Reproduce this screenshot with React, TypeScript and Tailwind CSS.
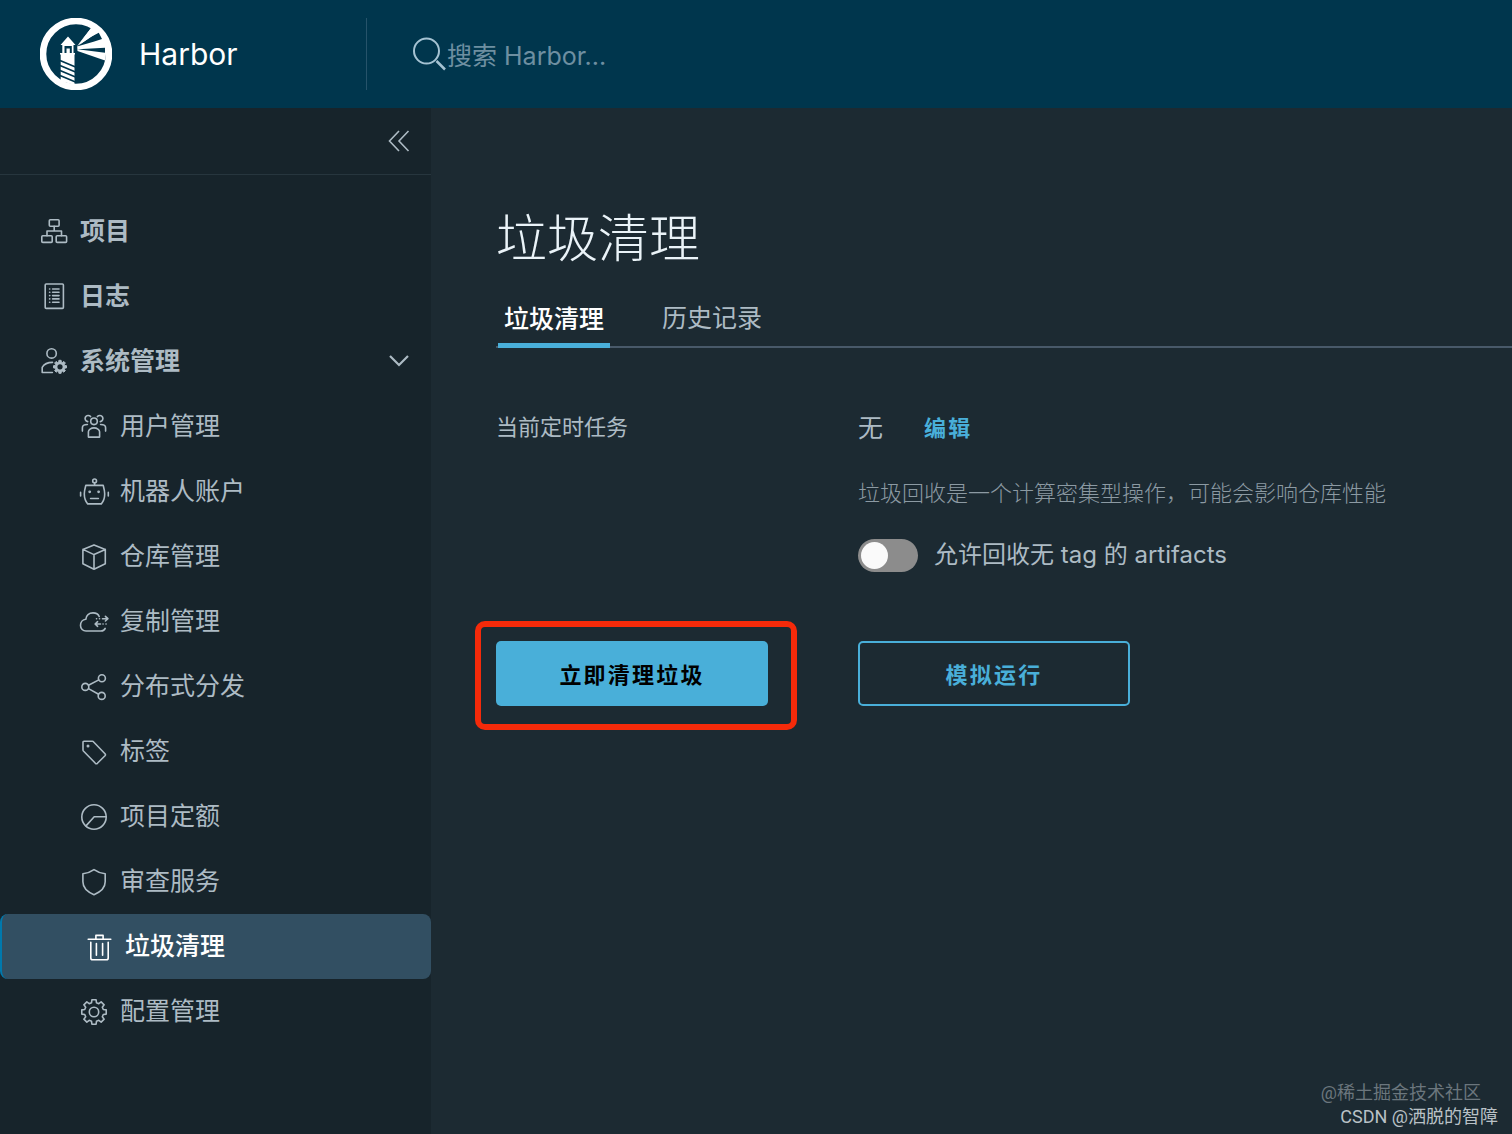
import React, { useState } from 'react';

type IconProps = { children: React.ReactNode; className?: string };

const Icon: React.FC<IconProps> = ({ children, className = '' }) => (
  <svg
    viewBox="0 0 28 28"
    fill="none"
    stroke="currentColor"
    strokeWidth="1.6"
    strokeLinejoin="round"
    strokeLinecap="round"
    aria-hidden="true"
    className={`size-7 shrink-0 overflow-visible ${className}`}
  >
    {children}
  </svg>
);

// Outline of a cog, eight teeth
const cog = (cx: number, cy: number, outer: number, inner: number) => {
  const points: string[] = [];
  for (let i = 0; i < 8; i++) {
    const a = (i * Math.PI) / 4;
    [
      [-0.26, inner],
      [-0.17, outer],
      [0.17, outer],
      [0.26, inner],
    ].forEach(([d, r]) => {
      points.push(`${(cx + r * Math.sin(a + d)).toFixed(2)} ${(cy - r * Math.cos(a + d)).toFixed(2)}`);
    });
  }
  return `M${points.join('L')}Z`;
};

const icons = {
  projects: (
    <Icon>
      <rect x="9.3" y="1.8" width="9.8" height="6.4" rx="1" />
      <rect x="1.8" y="17.8" width="10.4" height="6.6" rx="1" />
      <rect x="16.2" y="17.8" width="10.4" height="6.6" rx="1" />
      <path d="M14.2 8.2V13M7 17.8V13h14.5v4.8" />
    </Icon>
  ),
  logs: (
    <Icon>
      <rect x="5.2" y="1" width="18.2" height="24.4" rx="1" />
      <path d="M12.6 6h6.4M12.6 9.3h6.4M12.6 12.6h6.4M12.6 15.9h6.4M12.6 19.2h6.4" />
      <path d="M9.6 6h.2M9.6 9.3h.2M9.6 12.6h.2M9.6 15.9h.2M9.6 19.2h.2" />
    </Icon>
  ),
  admin: (
    <Icon>
      <circle cx="11.6" cy="5.4" r="4.7" />
      <path d="M12.4 24.5H2.2v-5.1c1.8-3.2 5.5-5 10.3-5" />
      <path d={cog(20, 18.8, 6.6, 5)} fill="currentColor" strokeWidth="1" />
      <circle cx="20" cy="18.8" r="2.6" className="fill-[#17242b]" stroke="none" />
    </Icon>
  ),
  users: (
    <Icon>
      <circle cx="14" cy="8.3" r="3.3" />
      <path d="M8.4 24.1v-5.3c0-2 2.6-3.9 5.6-3.9s5.6 1.9 5.6 3.9v5.3z" />
      <path d="M10.6 3.6a3.1 3.1 0 1 0-2.9 5M17.4 3.6a3.1 3.1 0 1 1 2.9 5" />
      <path d="M2.4 18.1v-3.4c0-1.8 1.9-3.2 5-3.2M25.6 18.1v-3.4c0-1.8-1.9-3.2-5-3.2" />
    </Icon>
  ),
  robot: (
    <Icon>
      <circle cx="14.6" cy="2.9" r="1.9" />
      <path d="M14.6 4.8v2.6M5.8 7.4h17.4c.7 2.6 1.5 5.4 1.5 8.5 0 4.2-1 7-3.4 10H7.7c-2.4-3-3.4-5.8-3.4-10 0-3.1.8-5.9 1.5-8.5z" />
      <path d="M.6 14.4V18M28.3 14.4V18M10.6 20.5h7.8" />
      <circle cx="9.7" cy="13.8" r=".6" fill="currentColor" />
      <circle cx="18.6" cy="13.8" r=".6" fill="currentColor" />
    </Icon>
  ),
  registry: (
    <Icon>
      <path d="M14 1.9l11.3 4.5v14.4L14 26.2 2.9 20.8V6.4zM2.9 6.4L14 11.6l11.3-5.2M14 11.6v14.6" />
    </Icon>
  ),
  replication: (
    <Icon>
      <path d="M19.2 8.500C18.300 6.200 15.900 4.900 13 4.900c-4 0-6.800 2.700-7.200 6.400C2.600 11.600.5 14.300.5 17.500c0 3.200 2.500 5.500 5.500 5.500h15c2 0 3.600-1 4.200-2.600" />
      <path d="M22.500 10.700h5.300M25.400 8.400l2.500 2.300-2.500 2.300M16.500 10.700h.1M19.500 10.700h.1M20.500 16h-5.300M17.600 13.700L15.100 16l2.500 2.300M23 16h.1M26 16h.1" />
    </Icon>
  ),
  distribution: (
    <Icon>
      <circle cx="21.9" cy="5.2" r="3.5" />
      <circle cx="5.3" cy="13.9" r="3.5" />
      <circle cx="21.7" cy="22.9" r="3.5" />
      <path d="M8.5 12.300l10.300-5.400M8.500 15.600l10.100 5.600" />
    </Icon>
  ),
  labels: (
    <Icon>
      <path d="M3.900 3.300h8.500a1.500 1.500 0 0 1 1 .4l11.600 12a1.500 1.500 0 0 1 0 2l-7.600 7.600a1.500 1.500 0 0 1-2 0L3.400 13a1.500 1.500 0 0 1-.4-1V4.200a.9.9 0 0 1 .9-.9z" />
      <circle cx="8" cy="8.1" r=".7" fill="currentColor" />
    </Icon>
  ),
  quotas: (
    <Icon>
      <circle cx="14" cy="14" r="12.200" />
      <path d="M26.200 13.800H14.200L6 22.900" />
    </Icon>
  ),
  scan: (
    <Icon>
      <path d="M14 1.600c3.300 2.300 7 3.800 11.200 4.200v8c0 5.800-4.700 10.200-11.200 12.900C7.500 24 2.900 19.600 2.900 13.800v-8C7 5.400 10.700 3.900 14 1.600z" />
    </Icon>
  ),
  trash: (
    <Icon>
      <path d="M3.200 6.300h22.600M10.900 5.900V2.400h7.200v3.500M5.800 9.200v15.700c0 1 .8 1.800 1.800 1.800h13.800c1 0 1.800-.8 1.800-1.800V9.200M11.400 10.600v11.700M17.600 10.600v11.700" />
    </Icon>
  ),
  settings: (
    <Icon>
      <path d={cog(14, 14, 12.4, 9.6)} />
      <circle cx="14" cy="14" r="4.7" />
    </Icon>
  ),
};

const Logo: React.FC = () => (
  <svg viewBox="0 0 72 72" className="size-[72px] shrink-0" aria-hidden="true">
    <circle cx="36" cy="36" r="33" fill="none" stroke="white" strokeWidth="6.6" />
    {/* light beam */}
    <path d="M37.200 28L51.500 9.500 62 13.500 67 30l-2 12.500L37.500 33z" fill="white" />
    <path d="M37 28.600L51 18.800l7.800-4 3.200 6.200-8.500 2.800zM37.500 31.300L65 29.800v5zM52 11l-1.500 4-13 13.500-.5-1z" className="fill-[#00364d]" />
    <path d="M37.200 28L51.500 9.500l7 4.500z" fill="white" />
    {/* tower */}
    <path d="M28 18.500l7.500 8.500h-2v8H35v1.600h-.5V67L20.700 63V36.600H20V35h2.300v-8h-1.800z" fill="white" />
    <path d="M24.500 35v-7h7.300v7h-2v-4.500h-3.300V35z" className="fill-[#00364d]" />
    <path d="M20 42.500l15.500 6.500M20 47.500L35.500 54M20 52.500L35.500 59M20 57.500L35.500 64" fill="none" strokeWidth="1.700" className="stroke-[#00364d]" />
  </svg>
);

type NavItem = { label: string; icon: keyof typeof icons };

const mainItems: NavItem[] = [
  { label: '项目', icon: 'projects' },
  { label: '日志', icon: 'logs' },
];

const adminItems: NavItem[] = [
  { label: '用户管理', icon: 'users' },
  { label: '机器人账户', icon: 'robot' },
  { label: '仓库管理', icon: 'registry' },
  { label: '复制管理', icon: 'replication' },
  { label: '分布式分发', icon: 'distribution' },
  { label: '标签', icon: 'labels' },
  { label: '项目定额', icon: 'quotas' },
  { label: '审查服务', icon: 'scan' },
  { label: '垃圾清理', icon: 'trash' },
  { label: '配置管理', icon: 'settings' },
];

const Header: React.FC = () => (
  <header className="flex h-[108px] shrink-0 items-center bg-[#00364d]">
    <a href="#home" className="flex w-[366px] shrink-0 items-center gap-[27px] pl-10 text-[30px] leading-9 text-white">
      <Logo />
      <span>Harbor</span>
    </a>
    <label className="flex h-[72px] flex-1 items-center border-l border-[#26536a] pl-[46px] text-[#a5c3d3]">
      <svg viewBox="0 0 34 34" className="size-[34px] shrink-0" fill="none" stroke="currentColor" strokeWidth="2" aria-hidden="true">
        <circle cx="13.5" cy="14" r="12.5" />
        <path d="M23.500 24l8.500 8.500" strokeWidth="2.500" />
      </svg>
      <input
        type="search"
        aria-label="搜索 Harbor"
        placeholder="搜索 Harbor..."
        className="h-10 flex-1 bg-transparent pt-1 text-[25px] text-white outline-none placeholder:text-[#6e8fa1]"
      />
    </label>
  </header>
);

const Sidebar: React.FC = () => {
  const [active, setActive] = useState('垃圾清理');
  const [open, setOpen] = useState(true);

  return (
    <aside className="w-[431px] shrink-0 bg-[#17242b] text-[25px] text-[#adbbc4]">
      <div className="flex h-[67px] items-center justify-end border-b border-[#27363e] pr-[21px]">
        <button type="button" aria-label="收起">
          <svg viewBox="0 0 22 22" className="size-[22px]" fill="none" stroke="currentColor" strokeWidth="1.600" aria-hidden="true">
            <path d="M11 1L1.500 11 11 21M20.500 1L11 11l9.500 10" />
          </svg>
        </button>
      </div>

      <nav className="flex flex-col pt-6">
        {mainItems.map((item) => (
          <a key={item.label} href="#nav" className="flex h-[65px] items-center gap-3 pl-10 font-bold">
            {icons[item.icon]}
            <span>{item.label}</span>
          </a>
        ))}

        <button
          type="button"
          onClick={() => setOpen(!open)}
          aria-expanded={open}
          className="flex h-[65px] items-center gap-3 pr-[22px] pl-10 font-bold"
        >
          {icons.admin}
          <span>系统管理</span>
          <svg viewBox="0 0 20 14" className="ml-auto w-5" fill="none" stroke="currentColor" strokeWidth="2.200" aria-hidden="true">
            <path d="M1 1l9 9 9-9" />
          </svg>
        </button>

        {open &&
          adminItems.map((item) => (
            <a
              key={item.label}
              href="#nav"
              onClick={() => setActive(item.label)}
              className={`flex h-[65px] items-center gap-3 ${
                item.label === active
                  ? 'rounded-lg border-l-2 border-[#0079ad] bg-[#324f62] pl-[83px] font-medium text-white'
                  : 'pl-20'
              }`}
            >
              {icons[item.icon]}
              <span>{item.label}</span>
            </a>
          ))}
      </nav>
    </aside>
  );
};

const GarbageCollection: React.FC = () => {
  const [allowUntagged, setAllowUntagged] = useState(false);

  return (
    <main className="flex-1 pt-[98px] pl-[65px]">
      <h1 className="text-[51px] leading-[66px] font-light text-[#eaf3f8]">垃圾清理</h1>

      <div role="tablist" className="mt-4 flex h-[60px] gap-11 border-b-2 border-[#485969] text-[25px]">
        <button
          type="button"
          role="tab"
          aria-selected="true"
          className="-mb-[2px] ml-[2px] border-b-[5px] border-[#49afd9] px-[6px] pt-2 font-medium text-white"
        >
          垃圾清理
        </button>
        <button type="button" role="tab" aria-selected="false" className="px-2 pt-1 text-[#adbbc4]">
          历史记录
        </button>
      </div>

      <section className="grid grid-cols-[362px_1fr] pt-[60px] text-[#adbbc4]">
        <h2 className="text-[22px] leading-[38px]">当前定时任务</h2>
        <div>
          <div className="flex items-center gap-[41px] leading-10">
            <span className="text-[25px]">无</span>
            <button type="button" className="text-[22px] font-bold tracking-widest text-[#49afd9]">
              编辑
            </button>
          </div>
          <p className="mt-[25px] text-[22px] leading-10 font-light text-[#8c9aa3]">
            垃圾回收是一个计算密集型操作，可能会影响仓库性能
          </p>
          <label className="mt-[22px] flex items-center gap-4 text-[24px] leading-10">
            <input
              type="checkbox"
              role="switch"
              checked={allowUntagged}
              onChange={(e) => setAllowUntagged(e.target.checked)}
              className="flex h-[33px] w-[60px] appearance-none items-center rounded-full bg-[#8c8c8c] px-[3px] before:size-[27px] before:rounded-full before:bg-[#fafafa] checked:justify-end checked:bg-[#49afd9]"
            />
            允许回收无 tag 的 artifacts
          </label>
        </div>
      </section>

      <div className="mt-[66px] flex gap-[90px] text-[22px] font-bold tracking-widest">
        <div className="relative">
          <button type="button" className="h-[65px] w-[272px] rounded-[5px] bg-[#49afd9] pt-1 text-black">
            立即清理垃圾
          </button>
          <span className="pointer-events-none absolute -top-5 -right-[29px] -bottom-6 -left-[21px] rounded-[10px] border-[6px] border-[#f52a0a]" />
        </div>
        <button type="button" className="h-[65px] w-[272px] rounded-[5px] border-2 border-[#49afd9] pt-1 text-[#49afd9]">
          模拟运行
        </button>
      </div>
    </main>
  );
};

export default function App() {
  return (
    <div className="relative flex min-h-screen flex-col bg-[#1c2a32] font-['Inter','Noto_Sans_CJK_SC',sans-serif]">
      <Header />
      <div className="flex flex-1">
        <Sidebar />
        <GarbageCollection />
      </div>
      <div className="pointer-events-none absolute right-[14px] bottom-[5px] flex flex-col items-end font-['Roboto','Noto_Sans_CJK_SC',sans-serif] text-[18px] leading-6">
        <span className="mr-[17px] text-[#6b767d]">@稀土掘金技术社区</span>
        <span className="text-[#b9c1c6]">CSDN @洒脱的智障</span>
      </div>
    </div>
  );
}
